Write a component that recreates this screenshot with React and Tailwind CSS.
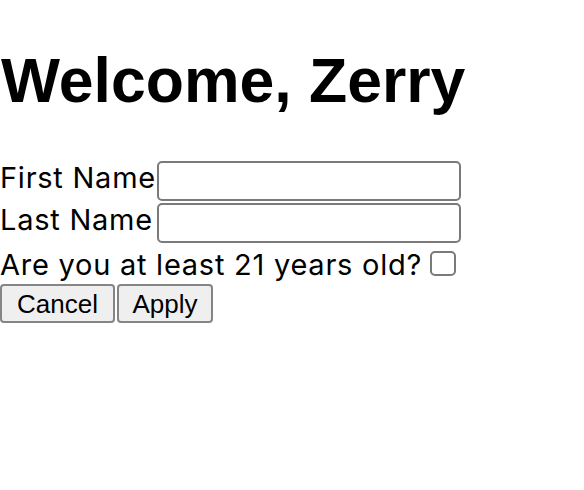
export default function App() {
  return (
    <div className="min-h-screen bg-white text-black">
      <h1 className="m-0 pt-[45px] pl-[1px] font-['Liberation_Sans',Arial,sans-serif] text-[62.5px] font-bold leading-[71px]">
        Welcome, Zerry
      </h1>

      <form className="mt-[45px] font-['Inter','Noto_Sans',sans-serif] text-[29px] tracking-[0.75px]">
        {/* name fields */}
        <div className="flex items-start">
          <label className="w-[157px] shrink-0 leading-[34px]">First Name</label>
          <input
            type="text"
            className="h-[40px] w-[304px] rounded-[5px] border-2 border-[#7a7a7a] bg-white"
          />
        </div>
        <div className="mt-[2px] flex items-start">
          <label className="w-[157px] shrink-0 leading-[34px]">Last Name</label>
          <input
            type="text"
            className="h-[40px] w-[304px] rounded-[5px] border-2 border-[#7a7a7a] bg-white"
          />
        </div>

        {/* age check */}
        <div className="mt-[5px] flex items-start">
          <label className="leading-[34px]">Are you at least 21 years old?</label>
          <input
            type="checkbox"
            className="ml-[8px] mt-[3px] h-[25px] w-[26px] appearance-none rounded-[5px] border-2 border-[#7a7a7a] bg-white"
          />
        </div>

        {/* actions */}
        <div className="mt-[2px] flex gap-[2px] font-['Liberation_Sans',Arial,sans-serif] text-[26px] tracking-normal">
          <button
            type="button"
            className="h-[39px] w-[115px] rounded-[4px] border-2 border-[#858585] bg-[#efefef] leading-none"
          >
            Cancel
          </button>
          <button
            type="button"
            className="h-[39px] w-[96px] rounded-[4px] border-2 border-[#858585] bg-[#efefef] leading-none"
          >
            Apply
          </button>
        </div>
      </form>
    </div>
  );
}
